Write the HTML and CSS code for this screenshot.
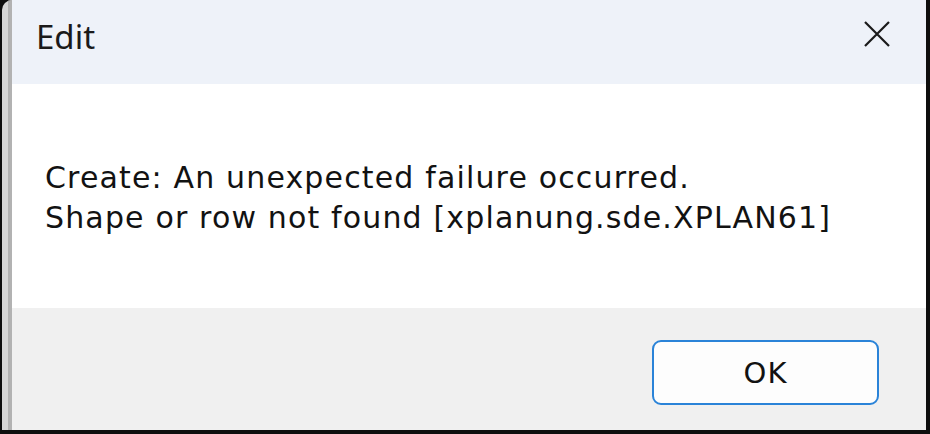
FILE: index.html
```html
<!DOCTYPE html>
<html>
<head>
<meta charset="utf-8">
<link rel="stylesheet" href="styles.css">
</head>
<body>
<div class="frame">
  <div class="window">
    <div class="titlebar">
      <span class="title">Edit</span>
      <button class="close" aria-label="Close">
        <svg width="26" height="26" viewBox="0 0 26 26"><path d="M1 1 L25 25 M25 1 L1 25" stroke="#1a1a1a" stroke-width="2.2" fill="none"/></svg>
      </button>
    </div>
    <div class="content">
      <p class="msg">Create: An unexpected failure occurred.<br>Shape or row not found [xplanung.sde.XPLAN61]</p>
    </div>
    <div class="footer">
      <button class="ok">OK</button>
    </div>
  </div>
</div>
</body>
</html>
```
FILE: styles.css
```css
html, body {
  margin: 0;
  padding: 0;
  width: 930px;
  height: 434px;
  background: #0e0e0e;
  overflow: hidden;
}
.frame {
  margin: 0 4px 4px 2px;
  height: 430px;
  display: flex;
  background: #d6d6d6;
  padding-left: 6px;
  border-top-left-radius: 10px;
  overflow: hidden;
}
.window {
  flex: 1;
  border-left: 4px solid #b2b2b2;
  display: flex;
  flex-direction: column;
  font-family: "Noto Sans", "Open Sans", sans-serif;
  color: #1a1a1a;
}
.titlebar {
  height: 84px;
  background: #eef2f9;
  display: flex;
  align-items: center;
  justify-content: space-between;
  padding: 0 36px 0 24px;
}
.title {
  font-size: 33px;
  line-height: 40px;
  margin-top: -10px;
}
.close {
  background: none;
  border: 0;
  padding: 0;
  width: 26px;
  height: 26px;
  margin-top: -16px;
  display: flex;
}
.content {
  height: 224px;
  background: #ffffff;
  padding: 0 0 0 33px;
  display: flex;
  align-items: center;
}
.msg {
  margin: 0;
  font-family: "DejaVu Sans", "Noto Sans", sans-serif;
  font-size: 30px;
  letter-spacing: 1.15px;
  line-height: 40px;
  padding-top: 4px;
  color: #121212;
}
.footer {
  flex: 1;
  background: #f0f0f0;
  display: flex;
  justify-content: flex-end;
  align-items: flex-start;
  padding: 32px 47px 0 0;
}
.ok {
  width: 227px;
  height: 65px;
  border: 2px solid #2a83d8;
  border-radius: 9px;
  background: #fdfdfd;
  font-family: "DejaVu Sans", "Noto Sans", sans-serif;
  font-size: 29px;
  letter-spacing: 1px;
  color: #121212;
  padding: 0;
}
```
